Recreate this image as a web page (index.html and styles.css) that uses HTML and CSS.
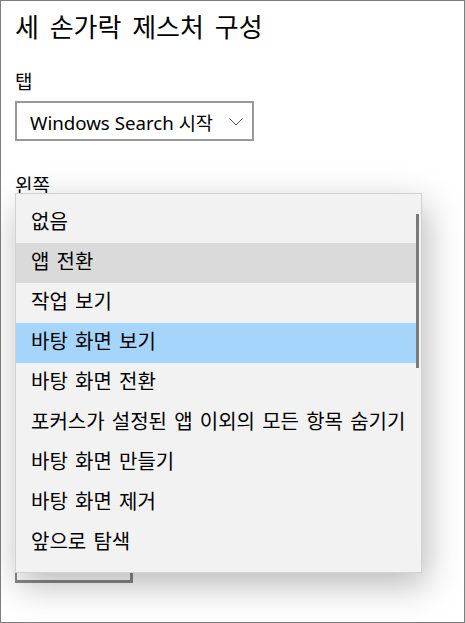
FILE: index.html
```html
<!DOCTYPE html>
<html lang="ko">
<head>
    <meta charset="UTF-8">
    <meta name="viewport" content="width=device-width, initial-scale=1.0">
    <title>세 손가락 제스처 구성</title>
    <link rel="stylesheet" href="styles.css">
</head>
<body>

    <div class="page">
        <h2 class="title">세 손가락 제스처 구성</h2>

        <div class="field">
            <div class="label">탭</div>
            <div class="select">
                <span>Windows Search 시작</span>
                <svg class="chevron" width="14" height="8" viewBox="0 0 14 8"><path d="M0.5 0.5 L7 7 L13.5 0.5" fill="none" stroke="#555" stroke-width="1"/></svg>
            </div>
        </div>

        <div class="field">
            <div class="label">왼쪽</div>
            <!-- lies under the open list, only its bottom edge shows -->
            <div class="select narrow"></div>
        </div>

        <!-- open dropdown for 왼쪽 -->
        <div class="popup">
            <ul class="list">
                <li>없음</li>
                <li class="hover">앱 전환</li>
                <li>작업 보기</li>
                <li class="selected">바탕 화면 보기</li>
                <li>바탕 화면 전환</li>
                <li>포커스가 설정된 앱 이외의 모든 항목 숨기기</li>
                <li>바탕 화면 만들기</li>
                <li>바탕 화면 제거</li>
                <li>앞으로 탐색</li>
            </ul>
            <div class="scrollbar"><div class="thumb"></div></div>
        </div>
    </div>

</body>
</html>
```

FILE: styles.css
```css
html, body {
    margin: 0;
    padding: 0;
}
body {
    font-family: "Noto Sans", "Noto Sans CJK KR", sans-serif;
    color: #000;
    background-color: #fff;
}
.page {
    position: relative;
    box-sizing: border-box;
    width: 465px;
    height: 623px;
    border: 1px solid #7d7d7d;
    padding: 0 14px;
    overflow: hidden;
}
.title {
    margin: 8px 0 0;
    font-size: 26px;
    font-weight: 400;
    line-height: 36px;
    word-spacing: 4px;
}
.field {
    margin-top: 24px;
}
.field + .field {
    margin-top: 32px;
}
.label {
    font-size: 19px;
    line-height: 26px;
}
.select {
    display: inline-flex;
    align-items: center;
    box-sizing: border-box;
    height: 40px;
    margin-top: 6px;
    padding: 0 9px 0 13px;
    border: 2px solid #999;
    font-size: 18.7px;
    background-color: #fff;
}
.select .chevron {
    margin-left: 16px;
    margin-top: 2px;
}
.select.narrow {
    width: 118px;
    height: 378px;
    border-color: #888;
    border-width: 2px 3px 3px 2px;
}
.popup {
    position: absolute;
    left: 14px;
    top: 192px;
    box-sizing: border-box;
    width: 407px;
    height: 380px;
    display: flex;
    padding: 9px 0;
    background-color: #f2f2f2;
    border: 1px solid #d2d2d2;
    box-shadow: 4px 12px 34px rgba(0, 0, 0, 0.28);
}
.list {
    flex: 1;
    list-style: none;
    margin: 0;
    padding: 0;
}
.list li {
    height: 40px;
    line-height: 38px;
    padding-left: 15px;
    font-size: 20px;
    word-spacing: 2px;
    white-space: nowrap;
}
.list li.hover {
    background-color: #dadada;
}
.list li.selected {
    background-color: #a6d5fb;
}
.scrollbar {
    width: 5px;
    padding-top: 11px;
}
.thumb {
    width: 3px;
    height: 154px;
    background-color: #7a7a7a;
}
```
